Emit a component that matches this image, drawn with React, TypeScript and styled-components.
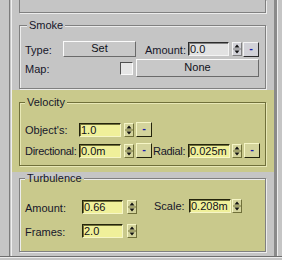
import styled, { createGlobalStyle } from "styled-components";

type Tone = "gray" | "yellow";

const pal = {
  gray: {
    bg: "#c5c5c5",
    dark: "#808080",
    light: "#ececec",
    field: "#e2e2e2",
    edge: "#2c2c2c",
    edgeLight: "#f4f4f4",
    btn: "#d2d2d8",
  },
  yellow: {
    bg: "#c9c98c",
    dark: "#70703a",
    light: "#e8e8b6",
    field: "#f0f09a",
    edge: "#24240c",
    edgeLight: "#f6f6c6",
    btn: "#d4d49c",
  },
};

const GlobalStyle = createGlobalStyle`
  html, body {
    margin: 0;
    padding: 0;
    background: #c5c5c5;
    overflow: hidden;
  }
  body {
    font-family: "Liberation Sans", Arial, sans-serif;
    font-size: 11px;
    color: #16162a;
  }
`;

const Screen = styled.div`
  width: 282px;
  height: 260px;
  display: flex;
  flex-direction: column;
  background: #c5c5c5;
`;

const Main = styled.div`
  display: flex;
  height: 256px;
`;

const Gutter = styled.div<{ $w: number }>`
  width: ${(p) => p.$w}px;
  flex-shrink: 0;
`;

const LeftRail = styled.div`
  width: 3px;
  flex-shrink: 0;
  box-sizing: border-box;
  border-left: 1px solid #7c7c7c;
  border-right: 1px solid #f0f0f0;
`;

const RightRail = styled.div`
  width: 4px;
  flex-shrink: 0;
  box-sizing: border-box;
  border-left: 3px solid #8a8a8a;
  border-right: 1px solid #ededed;
`;

const Panel = styled.div`
  width: 262px;
  flex-shrink: 0;
  display: flex;
  flex-direction: column;
`;

const Section = styled.div<{ $tone: Tone; $pb: number }>`
  background: ${(p) => pal[p.$tone].bg};
  padding-bottom: ${(p) => p.$pb}px;
  display: flex;
  flex-direction: column;
`;

const CutBox = styled.div`
  height: 12px;
  margin: 0 8px 0 7px;
  border: 1px solid ${pal.gray.dark};
  border-top: 0;
  box-shadow: 1px 1px 0 ${pal.gray.light};
`;

const Group = styled.div<{ $tone: Tone; $fill: Tone; $mt: number; $pb: number }>`
  margin: ${(p) => p.$mt}px 8px 0 7px;
  padding: 0 4px ${(p) => p.$pb}px 5px;
  border: 1px solid ${(p) => pal[p.$tone].dark};
  box-shadow: inset 1px 1px 0 ${(p) => pal[p.$tone].light},
    1px 1px 0 ${(p) => pal[p.$tone].light};
  background: ${(p) => pal[p.$fill].bg};
  display: flex;
  flex-direction: column;
`;

const Title = styled.div<{ $top: Tone; $bottom: Tone; $ml?: number }>`
  align-self: flex-start;
  height: 13px;
  line-height: 13px;
  margin: -7px 0 0 ${(p) => p.$ml ?? 0}px;
  padding: 0 2px;
  background: linear-gradient(
    to bottom,
    ${(p) => pal[p.$top].bg} 50%,
    ${(p) => pal[p.$bottom].bg} 50%
  );
`;

const Row = styled.div<{ $mt: number; $h: number }>`
  display: flex;
  align-items: center;
  height: ${(p) => p.$h}px;
  margin-top: ${(p) => p.$mt}px;
`;

const Cluster = styled.div<{ $mt?: number; $ml?: number }>`
  display: flex;
  align-items: center;
  align-self: flex-start;
  margin-top: ${(p) => p.$mt ?? 0}px;
  margin-left: ${(p) => p.$ml ?? 0}px;
`;

const Label = styled.span<{ $w: number; $ml?: number; $ls?: number }>`
  flex-shrink: 0;
  width: ${(p) => p.$w}px;
  margin-left: ${(p) => p.$ml ?? 0}px;
  letter-spacing: ${(p) => p.$ls ?? 0}px;
  white-space: nowrap;
  line-height: 14px;
  padding-top: 1px;
`;

const Field = styled.div<{ $tone: Tone; $w: number }>`
  box-sizing: border-box;
  flex-shrink: 0;
  width: ${(p) => p.$w}px;
  height: 14px;
  padding: 0 1px;
  line-height: 12px;
  background: ${(p) => pal[p.$tone].field};
  border: 1px solid;
  border-color: ${(p) =>
    `${pal[p.$tone].edge} ${pal[p.$tone].edgeLight} ${pal[p.$tone].edgeLight} ${pal[p.$tone].edge}`};
  box-shadow: inset 1px 1px 0 ${(p) => pal[p.$tone].dark};
  color: #101018;
  white-space: nowrap;
  overflow: hidden;
`;

const SpinBox = styled.div<{ $tone: Tone; $ml: number }>`
  box-sizing: border-box;
  flex-shrink: 0;
  width: 10px;
  height: 14px;
  margin-left: ${(p) => p.$ml}px;
  border: 1px solid;
  border-color: ${(p) =>
    `${pal[p.$tone].edgeLight} ${pal[p.$tone].dark} ${pal[p.$tone].dark} ${pal[p.$tone].edgeLight}`};
  background: ${(p) => pal[p.$tone].btn};
  display: flex;
`;

const Minus = styled.div<{ $tone: Tone; $ml: number }>`
  box-sizing: border-box;
  flex-shrink: 0;
  width: 16px;
  height: 15px;
  margin-left: ${(p) => p.$ml}px;
  border: 1px solid;
  border-color: ${(p) =>
    `${pal[p.$tone].edgeLight} ${pal[p.$tone].edge} ${pal[p.$tone].edge} ${pal[p.$tone].edgeLight}`};
  background: ${(p) => pal[p.$tone].btn};
  color: #1c1ca8;
  text-align: center;
  line-height: 11px;
  font-weight: bold;
`;

const Button = styled.div<{ $w: number; $h: number; $ml?: number }>`
  box-sizing: border-box;
  flex-shrink: 0;
  width: ${(p) => p.$w}px;
  height: ${(p) => p.$h}px;
  margin-left: ${(p) => p.$ml ?? 0}px;
  border: 1px solid;
  border-color: #fbfbfb #6a6a6a #6a6a6a #fbfbfb;
  background: #c8c8c8;
  text-align: center;
  line-height: ${(p) => p.$h - 3}px;
  color: #101018;
`;

const Check = styled.div`
  box-sizing: border-box;
  flex-shrink: 0;
  width: 13px;
  height: 13px;
  border: 1px solid;
  border-color: #505050 #fafafa #fafafa #505050;
  background: #e6e6e6;
`;

const BottomLine = styled.div`
  height: 1px;
  background: #6e6e6e;
  border-bottom: 1px solid #ececec;
`;

function Spinner({ tone, ml }: { tone: Tone; ml: number }) {
  return (
    <SpinBox $tone={tone} $ml={ml}>
      <svg width="8" height="12" viewBox="0 0 8 12">
        <path d="M4 1.5 L1.5 4.5 H6.5 Z" fill="#111" />
        <line x1="0" y1="6" x2="8" y2="6" stroke={pal[tone].dark} strokeWidth="1" />
        <path d="M1.5 7.5 H6.5 L4 10.5 Z" fill="#111" />
      </svg>
    </SpinBox>
  );
}

export default function App() {
  return (
    <Screen>
      <GlobalStyle />
      <Main>
        <Gutter $w={9} />
        <LeftRail />
        <Panel>
          <Section $tone="gray" $pb={1}>
            <CutBox />
            <Group $tone="gray" $fill="gray" $mt={12} $pb={11}>
              <Title $top="gray" $bottom="gray" $ml={2}>
                Smoke
              </Title>
              <Row $mt={9} $h={16}>
                <Label $w={38}>Type:</Label>
                <Button $w={73} $h={16}>
                  Set
                </Button>
                <Label $w={43} $ml={9}>
                  Amount:
                </Label>
                <Field $tone="gray" $w={41}>
                  0.0
                </Field>
                <Spinner tone="gray" ml={3} />
                <Minus $tone="gray" $ml={1}>
                  -
                </Minus>
              </Row>
              <Row $mt={2} $h={18}>
                <Label $w={95}>Map:</Label>
                <Check />
                <Button $w={123} $h={18} $ml={3}>
                  None
                </Button>
              </Row>
            </Group>
          </Section>

          <Section $tone="yellow" $pb={6}>
            <Group $tone="yellow" $fill="yellow" $mt={12} $pb={7}>
              <Title $top="yellow" $bottom="yellow">
                Velocity
              </Title>
              <Row $mt={13} $h={15}>
                <Label $w={54}>Object's:</Label>
                <Field $tone="yellow" $w={42}>
                  1.0
                </Field>
                <Spinner tone="yellow" ml={3} />
                <Minus $tone="yellow" $ml={2}>
                  -
                </Minus>
              </Row>
              <Row $mt={6} $h={15}>
                <Label $w={54} $ls={-0.3}>
                  Directional:
                </Label>
                <Field $tone="yellow" $w={42}>
                  0.0m
                </Field>
                <Spinner tone="yellow" ml={3} />
                <Minus $tone="yellow" $ml={2}>
                  -
                </Minus>
                <Label $w={35} $ml={1} $ls={-0.3}>
                  Radial:
                </Label>
                <Field $tone="yellow" $w={42}>
                  0.025m
                </Field>
                <Spinner tone="yellow" ml={2} />
                <Minus $tone="yellow" $ml={2}>
                  -
                </Minus>
              </Row>
            </Group>
          </Section>

          <Section $tone="gray" $pb={3}>
            <Group $tone="gray" $fill="yellow" $mt={6} $pb={13}>
              <Title $top="gray" $bottom="yellow">
                Turbulence
              </Title>
              <Row $mt={15} $h={14}>
                <Label $w={57}>Amount:</Label>
                <Field $tone="yellow" $w={41}>
                  0.66
                </Field>
                <Spinner tone="yellow" ml={4} />
                <Cluster $mt={-2} $ml={17}>
                  <Label $w={35}>Scale:</Label>
                  <Field $tone="yellow" $w={42}>
                    0.208m
                  </Field>
                  <Spinner tone="yellow" ml={1} />
                </Cluster>
              </Row>
              <Row $mt={10} $h={14}>
                <Label $w={57}>Frames:</Label>
                <Field $tone="yellow" $w={41}>
                  2.0
                </Field>
                <Spinner tone="yellow" ml={4} />
              </Row>
            </Group>
          </Section>
        </Panel>
        <RightRail />
        <Gutter $w={4} />
      </Main>
      <BottomLine />
    </Screen>
  );
}
